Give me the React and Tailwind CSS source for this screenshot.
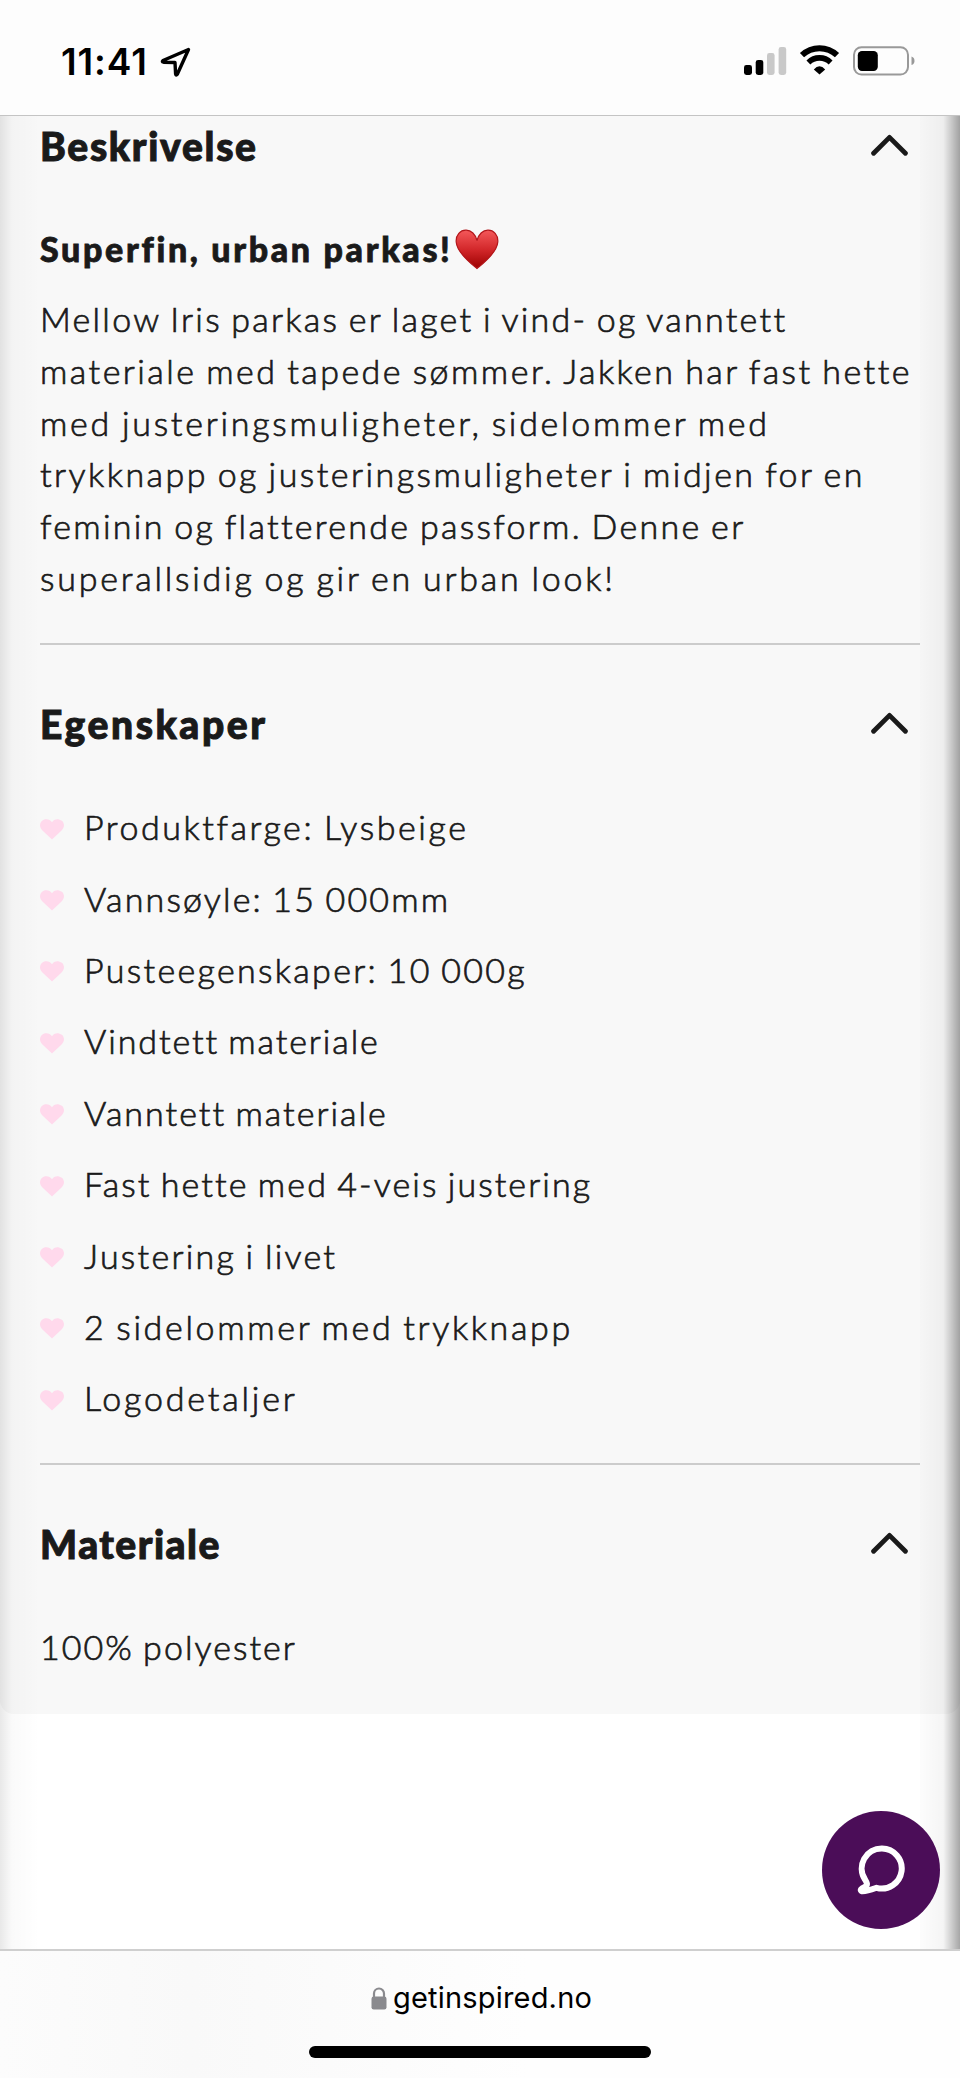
import React, { useState } from "react";

const descriptionLines = [
  { text: "Mellow Iris parkas er laget i vind- og vanntett", tracking: "tracking-[2.26px]" },
  { text: "materiale med tapede sømmer. Jakken har fast hette", tracking: "tracking-[2.47px]" },
  { text: "med justeringsmuligheter, sidelommer med", tracking: "tracking-[2.73px]" },
  { text: "trykknapp og justeringsmuligheter i midjen for en", tracking: "tracking-[2.47px]" },
  { text: "feminin og flatterende passform. Denne er", tracking: "tracking-[2.31px]" },
  { text: "superallsidig og gir en urban look!", tracking: "tracking-[2.78px]" },
];

const features = [
  { text: "Produktfarge: Lysbeige", tracking: "tracking-[2.56px]" },
  { text: "Vannsøyle: 15 000mm", tracking: "tracking-[2.18px]" },
  { text: "Pusteegenskaper: 10 000g", tracking: "tracking-[2.32px]" },
  { text: "Vindtett materiale", tracking: "tracking-[1.91px]" },
  { text: "Vanntett materiale", tracking: "tracking-[2.01px]" },
  { text: "Fast hette med 4-veis justering", tracking: "tracking-[2.08px]" },
  { text: "Justering i livet", tracking: "tracking-[2.26px]" },
  { text: "2 sidelommer med trykknapp", tracking: "tracking-[2.66px]" },
  { text: "Logodetaljer", tracking: "tracking-[2.8px]" },
];

const StatusBar = () => (
  <header className="flex h-[116px] shrink-0 items-start justify-between border-b border-[#c4c4c4] bg-[#fdfdfd] pr-[45px] pl-[61px] text-black">
    <div className="flex items-center pt-[39px]">
      <span className="font-['Inter'] text-[37px] leading-[45px] font-semibold tracking-[0.9px]">
        11:41
      </span>
      <svg className="ml-[12px] h-[32px] w-[32px]" viewBox="0 0 32 32" fill="none">
        <path
          d="M28.5 3.5 3 14.5Q1.500 15.800 3.500 16.200L15 16.500 15.600 28Q16 30 17.300 28.300Z"
          stroke="currentColor"
          strokeWidth="3.4"
          strokeLinejoin="round"
        />
      </svg>
    </div>

    <div className="flex items-start pt-[45px]">
      {/* Cell signal */}
      <svg className="mt-[1px] h-[30px] w-[43px]" viewBox="0 0 43 30">
        <rect x="0" y="19" width="8" height="10" rx="2.4" />
        <rect x="11.7" y="14" width="7.6" height="15" rx="2.4" />
        <rect x="23" y="7" width="7.6" height="22" rx="2.4" fill="#c9c9c9" />
        <rect x="34.6" y="1" width="7.6" height="28" rx="2.4" fill="#c9c9c9" />
      </svg>
      {/* Wifi */}
      <svg className="ml-[12px] h-[30px] w-[41px]" viewBox="0 0 41 30" fill="none" stroke="currentColor">
        <path d="M3 10.2a25.4 25.4 0 0 1 35 0" strokeWidth="6" />
        <path d="M9.4 17.4a16 16 0 0 1 22.2 0" strokeWidth="5.6" />
        <path d="M20.5 29.6 14.8 24.4Q20.5 18 26.2 24.4Z" fill="currentColor" stroke="none" />
      </svg>
      {/* Battery */}
      <svg className="ml-[13px] h-[31px] w-[62px]" viewBox="0 0 62 31">
        <rect x="1" y="2.2" width="54" height="27.4" rx="7.5" fill="none" stroke="#999" strokeWidth="2" />
        <rect x="4.8" y="6" width="20" height="20" rx="4.2" />
        <path d="M58.5 11.5q3 1 3 4.3t-3 4.3z" fill="#999" />
      </svg>
    </div>
  </header>
);

const PinkHeart = () => (
  <svg className="mt-[5px] h-[21px] w-[24px] shrink-0" viewBox="0 0 24 21">
    <path
      d="M12 20.5 2.2 11.2C-1 8-.4 3.6 2.2 1.7 5.6-.8 10 .3 12 3.2 14-.3 18.4-.8 21.8 1.7 24.4 3.6 25 8 21.8 11.2Z"
      fill="#ffd9ec"
    />
  </svg>
);

const RedHeart = () => (
  <svg className="ml-[2px] h-[41px] w-[44px]" viewBox="0 0 44 41">
    <defs>
      <linearGradient id="redHeart" x1="0" y1="0" x2="0" y2="1">
        <stop offset="0" stopColor="#f4585a" />
        <stop offset="0.5" stopColor="#d3282b" />
        <stop offset="1" stopColor="#9c0000" />
      </linearGradient>
    </defs>
    <path
      d="M22 39.5C18 36 2 24.5 1.2 13 .7 5.5 5.5 1.3 10.8 1.2 16.3 1 20.5 5.5 22 11.5 23.5 5.5 27.7 1 33.2 1.2 38.5 1.3 43.3 5.5 42.8 13 42 24.5 26 36 22 39.5Z"
      fill="url(#redHeart)"
      stroke="#b3161a"
      strokeWidth="1.2"
    />
  </svg>
);

const Section = ({ title, tracking, children, divider }) => {
  const [open, setOpen] = useState(true);

  return (
    <section className={divider ? "border-b-2 border-[#cccccc]" : ""}>
      <button
        type="button"
        onClick={() => setOpen(!open)}
        className="flex h-[60px] w-full items-center justify-between pr-[12px] text-left"
      >
        <h2 className={`-mt-[1px] text-[39px] leading-[58px] font-black [-webkit-text-stroke:1px_#1a1a1a] ${tracking}`}>
          {title}
        </h2>
        <svg
          className={`-mt-[2px] h-[22px] w-[37px] ${open ? "" : "rotate-180"}`}
          viewBox="0 0 37 22"
          fill="none"
          stroke="currentColor"
          strokeWidth="4.8"
          strokeLinecap="round"
          strokeLinejoin="round"
        >
          <path d="M2.6 19.3 18.5 3.4 34.4 19.3" />
        </svg>
      </button>
      {open && children}
    </section>
  );
};

const App = () => {
  return (
    <div className="relative flex h-[2078px] w-[960px] flex-col overflow-hidden bg-white font-['Lato',sans-serif] text-[#1a1a1a]">
      <StatusBar />

      <main className="relative flex-1">
        <div className="h-[1598px] rounded-b-[14px] bg-[#f8f8f8] px-[40px]">
          <Section title="Beskrivelse" tracking="tracking-[1.7px]" divider>
            <div className="mt-[47px] flex h-[52px] items-center">
              <strong className="text-[34px] leading-[52px] font-black tracking-[2.66px] [-webkit-text-stroke:0.8px_#1a1a1a]">
                Superfin, urban parkas!
              </strong>
              <RedHeart />
            </div>
            <p className="mt-[18px] h-[350px] text-[34px] leading-[51.75px] font-light [-webkit-text-stroke:0.7px_#1a1a1a] [word-spacing:-2px]">
              {descriptionLines.map((line) => (
                <span key={line.text} className={`block whitespace-nowrap ${line.tracking}`}>
                  {line.text}
                </span>
              ))}
            </p>
          </Section>

          <div className="pt-[49px]">
            <Section title="Egenskaper" tracking="tracking-[2.6px]" divider>
              <ul className="mt-[34px] h-[675px] pt-[3px] text-[34px] font-light [-webkit-text-stroke:0.7px_#1a1a1a] [word-spacing:-2px]">
                {features.map((item) => (
                  <li key={item.text} className="flex h-[71.4px] items-center">
                    <PinkHeart />
                    <span className={`ml-[20px] whitespace-nowrap ${item.tracking}`}>
                      {item.text}
                    </span>
                  </li>
                ))}
              </ul>
            </Section>
          </div>

          <div className="pt-[49px]">
            <Section title="Materiale" tracking="tracking-[1.5px]">
              <p className="mt-[47px] text-[34px] leading-[52px] font-light tracking-[2.04px] [-webkit-text-stroke:0.7px_#1a1a1a] [word-spacing:-2px]">
                100% polyester
              </p>
            </Section>
          </div>
        </div>

        {/* Page edge shadows */}
        <div className="pointer-events-none absolute inset-y-0 left-0 w-[40px] bg-linear-to-r from-black/9 via-black/2 via-30% to-transparent" />
        <div className="pointer-events-none absolute inset-y-0 right-0 w-[40px] bg-linear-to-l from-black/35 via-black/4 via-42% to-black/1" />

        {/* Chat button */}
        <button
          type="button"
          aria-label="Chat"
          className="absolute right-[20px] bottom-[20px] flex h-[118px] w-[118px] items-center justify-center rounded-full bg-[#4b0d58]"
        >
          <svg className="h-[50px] w-[48px]" viewBox="0 0 48 50" fill="none">
            <path
              d="M25 3.5a20 20 0 1 1-5.5 39.3C15 44.5 10 46.5 5 46.3 2.5 45 4 43.5 8 41.8 11.5 40 9.5 37 8 34.5A20 20 0 0 1 25 3.5Z"
              stroke="white"
              strokeWidth="6"
              strokeLinejoin="round"
            />
          </svg>
        </button>
      </main>

      {/* Browser address bar */}
      <footer className="flex h-[129px] shrink-0 flex-col items-center border-t-2 border-[#cfcfcf] bg-linear-to-r from-[#fcfcfc] via-[#f9f9f9] via-20% to-[#fefefe] to-55% text-black">
        <div className="flex items-center pt-[27px] pl-[3px]">
          <svg className="mr-[6px] h-[23px] w-[16px]" viewBox="0 0 16 23" fill="none">
            <path d="M3 11V6.5a5 5 0 0 1 10 0V11" stroke="#8a8a8e" strokeWidth="2.2" />
            <rect x="0.5" y="9.5" width="15" height="13" rx="2.2" fill="#8a8a8e" />
          </svg>
          <span className="font-['Inter'] text-[29px] leading-[40px] tracking-[0.2px]">
            getinspired.no
          </span>
        </div>
        <div className="mt-[28px] h-[12px] w-[342px] rounded-full bg-black" />
      </footer>
    </div>
  );
};

export default App;
